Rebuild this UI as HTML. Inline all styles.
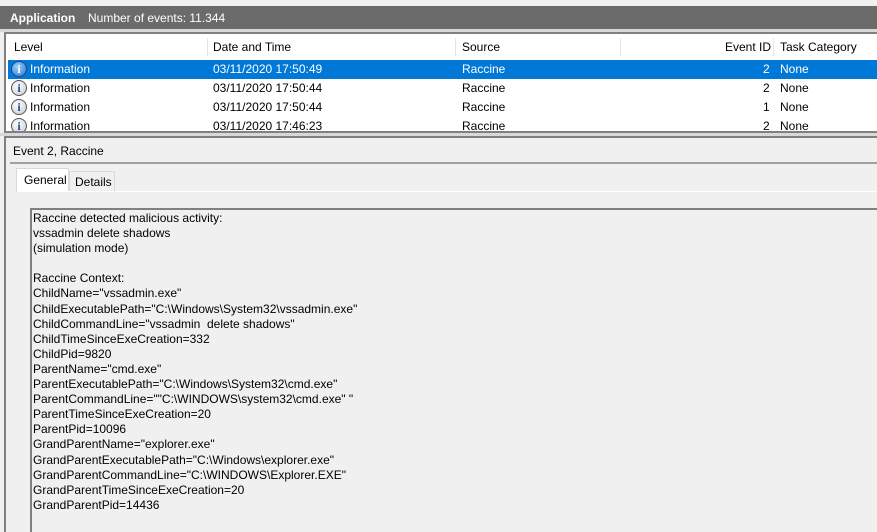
<!DOCTYPE html><html><head><style>
html,body{margin:0;width:877px;height:532px;overflow:hidden}
body{background:#f0f0f0;font-family:"Liberation Sans",sans-serif;font-size:12px;color:#000;position:relative}
.a{position:absolute}
.row{position:absolute;left:8px;width:869px;height:19px;line-height:19px;white-space:nowrap}
.row span{position:absolute}
.ic{position:absolute;left:3px;top:1px;width:16px;height:16px;border-radius:50%;border:1px solid #555;background:radial-gradient(circle at 40% 35%,#fff,#c8c8c8);box-sizing:border-box;color:#1c4fa0;font:bold 12px "Liberation Serif",serif;text-align:center;line-height:15px}
.sel .ic{background:radial-gradient(circle at 40% 35%,#9cd0ff,#2b74c8);border-color:#1a4a90;color:#fff}
pre{margin:0;font-family:"Liberation Sans",sans-serif;font-size:12px;line-height:15.1px}
</style></head><body>
<div class="a" style="left:0;top:6px;width:877px;height:23px;background:#6b6b6b;color:#fff;line-height:24px">
<b class="a" style="left:10px">Application</b><span class="a" style="left:88px">Number of events: 11.344</span></div>
<div class="a" style="left:0;top:29px;width:877px;height:3px;background:#d8d8d8"></div>
<div class="a" style="left:4px;top:32px;width:873px;height:101px;border-left:2px solid #808080;border-top:2px solid #808080;border-bottom:2px solid #808080;background:#fff;box-sizing:border-box"></div>
<div class="a" style="left:6px;top:35px;width:871px;height:24px;line-height:24px;background:#fff">
<span class="a" style="left:8px">Level</span>
<span class="a" style="left:201px;top:3px;height:18px;border-left:1px solid #e5e5e5"></span><span class="a" style="left:207px">Date and Time</span>
<span class="a" style="left:449px;top:3px;height:18px;border-left:1px solid #e5e5e5"></span><span class="a" style="left:456px">Source</span>
<span class="a" style="left:614px;top:3px;height:18px;border-left:1px solid #e5e5e5"></span><span class="a" style="left:719px">Event ID</span>
<span class="a" style="left:767px;top:3px;height:18px;border-left:1px solid #e5e5e5"></span><span class="a" style="left:774px">Task Category</span>
</div>
<div class="row sel" style="top:60px;background:#0078d7;color:#fff"><div class="ic">i</div><span style="left:22px">Information</span><span style="left:205px">03/11/2020 17:50:49</span><span style="left:454px">Raccine</span><span style="left:755px">2</span><span style="left:772px">None</span></div>
<div class="row" style="top:79px"><div class="ic">i</div><span style="left:22px">Information</span><span style="left:205px">03/11/2020 17:50:44</span><span style="left:454px">Raccine</span><span style="left:755px">2</span><span style="left:772px">None</span></div>
<div class="row" style="top:98px"><div class="ic">i</div><span style="left:22px">Information</span><span style="left:205px">03/11/2020 17:50:44</span><span style="left:454px">Raccine</span><span style="left:755px">1</span><span style="left:772px">None</span></div>
<div class="row" style="top:117px;height:14px;overflow:hidden"><div class="ic">i</div><span style="left:22px">Information</span><span style="left:205px">03/11/2020 17:46:23</span><span style="left:454px">Raccine</span><span style="left:755px">2</span><span style="left:772px">None</span></div>
<div class="a" style="left:0;top:133px;width:877px;height:3px;background:#d8d8d8"></div>
<div class="a" style="left:4px;top:136px;width:873px;height:396px;border-left:2px solid #808080;border-top:2px solid #808080;box-sizing:border-box"></div>
<div class="a" style="left:13px;top:144px">Event 2, Raccine</div>
<div class="a" style="left:10px;top:162px;width:867px;height:2px;background:#a0a0a0"></div>
<div class="a" style="left:16px;top:168px;width:53px;height:24px;background:#fff;border:1px solid #d9d9d9;border-bottom:none;box-sizing:border-box;line-height:22px;padding-left:7px">General</div>
<div class="a" style="left:69px;top:171px;width:46px;height:21px;background:#f0f0f0;border:1px solid #d9d9d9;border-bottom:none;box-sizing:border-box;line-height:20px;padding-left:5px">Details</div>
<div class="a" style="left:18px;top:191px;width:859px;height:1px;background:#fff"></div>
<div class="a" style="left:30px;top:208px;width:847px;height:324px;border-left:2px solid #808080;border-top:2px solid #808080;box-sizing:border-box"></div>
<pre class="a" style="left:33px;top:211px">Raccine detected malicious activity:
vssadmin delete shadows
(simulation mode)

Raccine Context:
ChildName="vssadmin.exe"
ChildExecutablePath="C:\Windows\System32\vssadmin.exe"
ChildCommandLine="vssadmin  delete shadows"
ChildTimeSinceExeCreation=332
ChildPid=9820
ParentName="cmd.exe"
ParentExecutablePath="C:\Windows\System32\cmd.exe"
ParentCommandLine=""C:\WINDOWS\system32\cmd.exe" "
ParentTimeSinceExeCreation=20
ParentPid=10096
GrandParentName="explorer.exe"
GrandParentExecutablePath="C:\Windows\explorer.exe"
GrandParentCommandLine="C:\WINDOWS\Explorer.EXE"
GrandParentTimeSinceExeCreation=20
GrandParentPid=14436</pre>
</body></html>
